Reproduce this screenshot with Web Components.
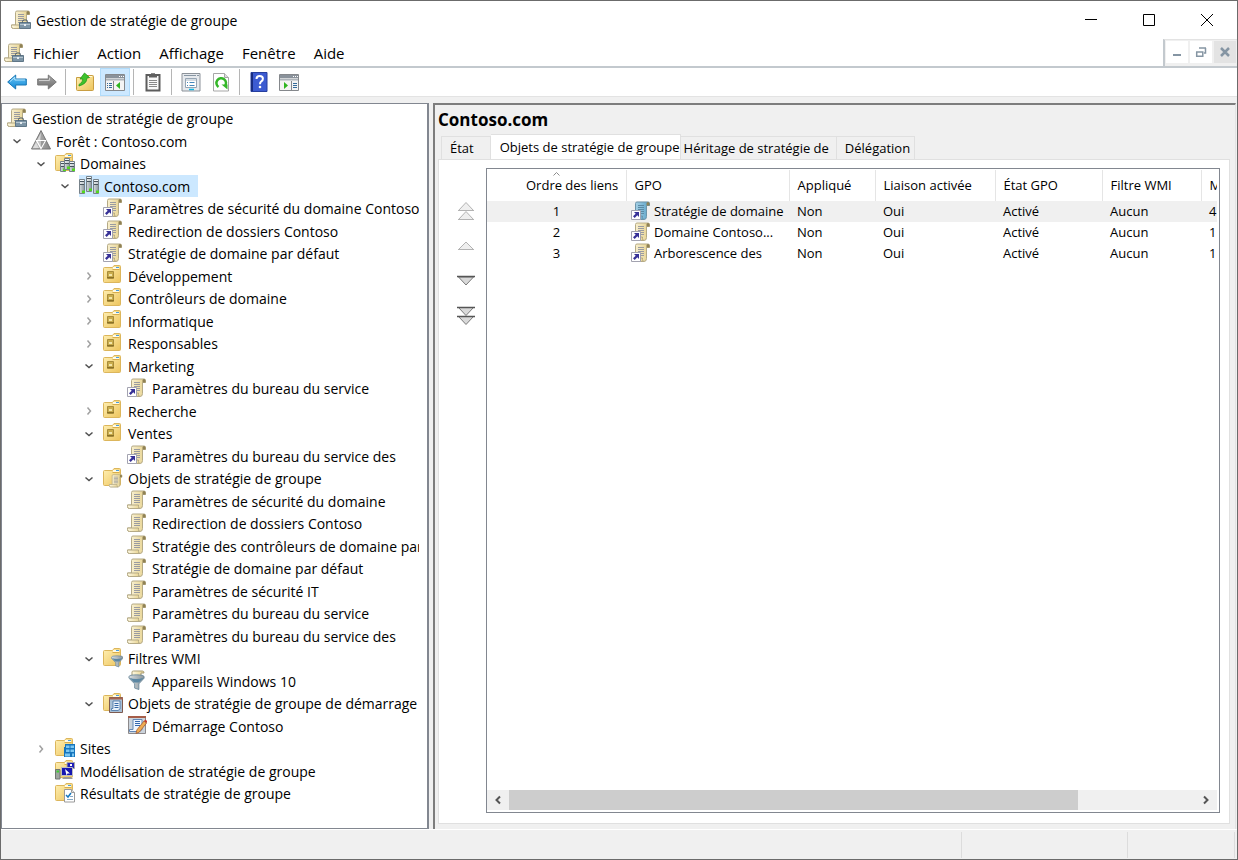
<!DOCTYPE html>
<html lang="fr">
<head>
  <meta charset="utf-8">
  <meta name="viewport" content="width=device-width, initial-scale=1">
  <title>Gestion de stratégie de groupe</title>
  <style>
    body {
      margin: 0;
      font-family: "Open Sans", "Noto Sans", sans-serif;
      font-size: 14px;
      color: #000;
    }
  </style>
</head>
<body>
  <gp-window>
    <title-bar slot="title">Gestion de stratégie de groupe</title-bar>
    <menu-bar slot="menu"></menu-bar>
    <tool-bar slot="tools"></tool-bar>
    <gp-tree slot="tree">
      <tree-item level="0" icon="console">Gestion de stratégie de groupe</tree-item>
      <tree-item level="1" icon="forest" state="open">Forêt : Contoso.com</tree-item>
      <tree-item level="2" icon="domains" state="open">Domaines</tree-item>
      <tree-item level="3" icon="domain" state="open" selected>Contoso.com</tree-item>
      <tree-item level="4" icon="link">Paramètres de sécurité du domaine Contoso</tree-item>
      <tree-item level="4" icon="link">Redirection de dossiers Contoso</tree-item>
      <tree-item level="4" icon="link">Stratégie de domaine par défaut</tree-item>
      <tree-item level="4" icon="unit" state="closed">Développement</tree-item>
      <tree-item level="4" icon="unit" state="closed">Contrôleurs de domaine</tree-item>
      <tree-item level="4" icon="unit" state="closed">Informatique</tree-item>
      <tree-item level="4" icon="unit" state="closed">Responsables</tree-item>
      <tree-item level="4" icon="unit" state="open">Marketing</tree-item>
      <tree-item level="5" icon="link">Paramètres du bureau du service</tree-item>
      <tree-item level="4" icon="unit" state="closed">Recherche</tree-item>
      <tree-item level="4" icon="unit" state="open">Ventes</tree-item>
      <tree-item level="5" icon="link">Paramètres du bureau du service des</tree-item>
      <tree-item level="4" icon="objects" state="open">Objets de stratégie de groupe</tree-item>
      <tree-item level="5" icon="policy">Paramètres de sécurité du domaine</tree-item>
      <tree-item level="5" icon="policy">Redirection de dossiers Contoso</tree-item>
      <tree-item level="5" icon="policy">Stratégie des contrôleurs de domaine par</tree-item>
      <tree-item level="5" icon="policy">Stratégie de domaine par défaut</tree-item>
      <tree-item level="5" icon="policy">Paramètres de sécurité IT</tree-item>
      <tree-item level="5" icon="policy">Paramètres du bureau du service</tree-item>
      <tree-item level="5" icon="policy">Paramètres du bureau du service des</tree-item>
      <tree-item level="4" icon="filters" state="open">Filtres WMI</tree-item>
      <tree-item level="5" icon="filter">Appareils Windows 10</tree-item>
      <tree-item level="4" icon="starters" state="open">Objets de stratégie de groupe de démarrage</tree-item>
      <tree-item level="5" icon="starter">Démarrage Contoso</tree-item>
      <tree-item level="2" icon="sites" state="closed">Sites</tree-item>
      <tree-item level="2" icon="modeling">Modélisation de stratégie de groupe</tree-item>
      <tree-item level="2" icon="results">Résultats de stratégie de groupe</tree-item>
    </gp-tree>
    <detail-pane slot="detail">
      <span slot="heading">Contoso.com</span>
      <order-buttons slot="order"></order-buttons>
      <link-list slot="list"></link-list>
    </detail-pane>
    <status-bar slot="status"></status-bar>
  </gp-window>

  <script>
    // ---- icons, all on a 20x20 grid ----
    const DEFS = `
      <defs>
        <linearGradient id="paper" x1="0" x2="1"><stop offset="0" stop-color="#fdf8e2"/><stop offset="1" stop-color="#e6d18c"/></linearGradient>
        <linearGradient id="gold" x1="0" y1="0" x2="1" y2="1"><stop offset="0" stop-color="#fff0b4"/><stop offset="1" stop-color="#edc45c"/></linearGradient>
        <linearGradient id="steel" x1="0" x2="1"><stop offset="0" stop-color="#d6dcdf"/><stop offset="1" stop-color="#8b969c"/></linearGradient>
        <linearGradient id="blue" x1="0" y1="0" x2="0" y2="1"><stop offset="0" stop-color="#6cc6f5"/><stop offset="1" stop-color="#1187d6"/></linearGradient>
        <linearGradient id="grey" x1="0" y1="0" x2="0" y2="1"><stop offset="0" stop-color="#aaa"/><stop offset="1" stop-color="#6c6c6c"/></linearGradient>
        <linearGradient id="tri" x1="0" x2="1"><stop offset="0" stop-color="#c4c4c4"/><stop offset="1" stop-color="#868686"/></linearGradient>
        <linearGradient id="aqua" x1="0" x2="1"><stop offset="0" stop-color="#b9dcec"/><stop offset="1" stop-color="#5ba3c8"/></linearGradient>
      </defs>`

    const scroll = (fill = 'paper', edge = '#b5aa86', line = '#9a9ba0') => `
      <path d="M4.500 2.500q0-1.500 1.500-1.500h11q1.500 0 1.500 1.500v2h-3v11q0 3-2.500 3h-10.500q-2 0-2-2v-1.500h4z" fill="url(#${fill})" stroke="${edge}"/>
      <path d="M15.500 4.500v-2q0-1.500 1.500-1.500t1.500 1.500v2z" fill="#8f8155"/>
      <path d="M.5 15h11v1.500q0 2 1.500 2H2.500q-2 0-2-2z" fill="url(#${fill})" stroke="${edge}"/>
      <path d="M7 4.500h6M7 6.500h6M7 8.500h6M7 10.500h6M7 12.500h6" stroke="${line}"/>`

    const shortcut = `
      <path d="M.5 9.500h9v9h-9z" fill="#fff" stroke="#a3a3b0"/>
      <path d="M3 11h5v5l-1.700-1.700-2.600 2.700-1.700-1.700 2.700-2.600z" fill="#373197"/>`

    const folder = `
      <path d="M.5 3.500q0-1 1-1h8l1.500-2h5.500q1 0 1 1v15q0 1-1 1h-15q-1 0-1-1z" fill="url(#gold)" stroke="#dcb65c"/>
      <path d="M10 4V2h6v2z" fill="#fffbe6"/>
      <path d="M13 2.500h3" stroke="#4a9ede"/>
      <path d="M9.500 4.500h7" stroke="#d7ad4b"/>`

    const server = (x, y, h) => `
      <path d="M${x + .5} ${y + .5}h5v${h}h-5z" fill="url(#steel)" stroke="#77828a"/>
      <path d="M${x + 1} ${y + 2.500}h4M${x + 1} ${y + 5.500}h4" stroke="#46545d"/>
      <path d="M${x + 1} ${y + 1.500}h4M${x + 1} ${y + 4}h4" stroke="#f4f8fa"/>
      <path d="M${x + 3} ${y + h - 2.500}h3v2.500h-3z" fill="#52d81d"/>`

    const funnel = `
      <path d="M.5 5q0-2 8-2t8 2v1.500l-5.500 6v6l-4.500-1.500v-4.500l-6-6z" fill="url(#steel)" stroke="#5c7d92" stroke-width=".8"/>
      <path d="M1 6q7 3 15 0l-5 5H6z" fill="#5b87a3"/>`

    const consoleWindow = (list, arrow) => `
      <path d="M.5 2.500h19v16H.5z" fill="#f4f4f4" stroke="#85888c"/>
      <path d="M1 3h18v3H1z" fill="#8a929b"/>
      <path d="M14 4.500h1M16 4.500h1M18 4.500h1" stroke="#fff"/>
      <path d="M1 7.500h18" stroke="#aeb4ba" stroke-width="2"/>
      ${list}${arrow}`

    const ICONS = {
      console: `${scroll()}
        <path d="M8.500 12.500h11v6h-11z" fill="#7d95a6" stroke="#5f7687"/>
        <path d="M11.500 12.500v-1q0-1.500 1.500-1.500h2q1.500 0 1.500 1.500v1" fill="none" stroke="#4a5b67"/>
        <path d="M9 14.500h10" stroke="#b4c4cf"/><path d="M13 14h2v2h-2z" fill="#e8eef2"/>`,
      forest: `
        <path d="M10 .5l9.500 18.500H.5z" fill="url(#tri)" stroke="#777"/>
        <path d="M10 3l-4.500 8.500h3.500zM5 12.500l-3 5.500h6z" fill="#ececec" opacity=".7"/>
        <path d="M5.500 10.500h9l-4.500 8z" fill="#c4c4c4" stroke="#fff" stroke-width="1.200"/>
        <path d="M10 11v6.500l3.700-6.500z" fill="#9a9a9a"/>`,
      domains: `${folder}${server(5, 8, 10)}${server(14, 8, 10)}${server(9, 5, 11)}`,
      domain: `${server(0, 4, 14)}${server(14, 4, 14)}${server(7, 1, 15)}`,
      link: `${scroll()}${shortcut}`,
      linkActive: `${scroll('aqua', '#6c94aa', '#5b8aa5')}${shortcut}`,
      policy: scroll(),
      unit: `${folder}
        <path d="M4.500 6.500h6v7h-6z" fill="#c9ac4c" stroke="#a88c3a"/>
        <path d="M4 12.500h7" stroke="#8a7026"/>
        <path d="M6 9h3v2H6z" fill="#f3e6a8"/>`,
      objects: `${folder}<svg x="6" y="6" width="14" height="14" viewBox="0 0 20 20">${scroll()}</svg>`,
      filters: `${folder}<svg x="8" y="5" width="13" height="15" viewBox="0 0 18 19">${funnel}</svg>`,
      filter: `<path d="M6.500 1h9q1.500 0 1.500 2h-3v4H5V2q0-1 1.500-1z" fill="url(#paper)" stroke="#a99d76"/>
        <svg x="1" y="2" width="18" height="18" viewBox="0 0 18 19">${funnel}</svg>`,
      starters: `${folder}
        <path d="M6.500 4.500h13v15h-13z" fill="#a9bfd4" stroke="#7e5b50"/>
        <path d="M6 5.500h14" stroke="#a46450" stroke-width="2"/>
        <path d="M10 8h7v8l-2 1.500H8.500v-2H10z" fill="#e8f1fa" stroke="#4471a5" stroke-width=".8"/>
        <path d="M11.500 10.500h4M11.500 12.500h4M11.500 14.500h4" stroke="#396aa8"/>`,
      starter: `
        <path d="M1.500 1.500h17v17h-17z" fill="#cbd3db" stroke="#8c898b"/>
        <path d="M1 2h18" stroke="#a65d48" stroke-width="2"/>
        <path d="M6 4.500h9v10l-2 2H2.500v-2H6z" fill="#eff6ff" stroke="#6588b5"/>
        <path d="M8 6.500h5M8 8.500h5M8 10.500h5" stroke="#3468ae" stroke-width="1.200"/>
        <path d="M17 6l2.500 2-7 9-3.500 1.500.8-3.500z" fill="#efac51" stroke="#a65d33" stroke-width=".8"/>
        <path d="M17 6l1.500-1.500 2 2-1 1.500z" fill="#c33d2f"/>`,
      sites: `${folder}
        <path d="M10 6h10v13H9V9h1z" fill="#1675bd"/>
        <path d="M11 7.500h3.500v2.500H11zM15.500 7.500H19v2.500h-3.500zM11 11.500h3.500v2.500H11zM15.500 11.500H19v2.500h-3.500zM10 15.500h5v3h-5zM17 15.500h2v3h-2z" fill="#7cc8f3"/>`,
      modeling: `${folder}
        <path d="M12 2.500h7.500v6H12z" fill="#2020b9" stroke="#aaa"/>
        <path d="M6.500 7.500h11v8h-11z" fill="#1717b1" stroke="#bebebe"/>
        <path d="M15 4h2v2h-2z" fill="#fff"/><path d="M10 9l5 4.500h-2.500l-1 2z" fill="#fff"/>
        <path d="M9 17h7l2 2H7z" fill="#9b9b9b"/>
        <path d="M.5 9.500h4.500v9.500H.5z" fill="#9fa6a1" stroke="#707570"/>
        <path d="M1.500 11.500h2.500" stroke="#3ecf35" stroke-width="2"/>`,
      results: `${folder}
        <path d="M9.500 6.500h7l3 3v9.500h-10z" fill="#fff" stroke="#9a9a9a"/>
        <path d="M16.500 6.500v3h3" fill="#ddd" stroke="#9a9a9a"/>
        <path d="M11 12l2 2 3-4" fill="none" stroke="#1677bd" stroke-width="1.500"/>
        <path d="M15 13.500h3M12 16.500h6" stroke="#85a9c7"/>`,
      back: `<path d="M.7 10l8-7v4h10.600v6H8.700v4z" fill="url(#blue)" stroke="#1876b5"/><path d="M3 9.500l4.800-4.200V8H18" stroke="#b3e6ff" fill="none"/>`,
      forward: `<path d="M19.300 10l-8-7v4H.7v6h10.600v4z" fill="url(#grey)" stroke="#777"/><path d="M2 8.500h10.500V6" stroke="#ccc" fill="none"/>`,
      up: `<path d="M1.500 5.500h6l1.500-2h8.500q1 0 1 1v13q0 1-1 1h-15q-1 0-1-1z" fill="url(#gold)" stroke="#c99e42"/>
        <path d="M11 4.500h6" stroke="#fffbe0"/>
        <path d="M4 12.500q4-2 3.800-5.500H5l4.500-6 5 4.500-2.700.7q.5 5.300-7.800 7.800z" fill="#3ec32c" stroke="#24971a" stroke-width=".8"/>`,
      treePane: consoleWindow('<path d="M8.500 9v9" stroke="#85888c"/><path d="M2 11.500h1M2 13.500h1M2 15.500h1M4 11.500h3M4 13.500h3M4 15.500h3" stroke="#356b9a"/>', '<path d="M15 10v7l-4-3.500z" fill="#2fb520"/>'),
      actionPane: consoleWindow('<path d="M12.500 9v9" stroke="#85888c"/><path d="M14 11.500h4M14 13.500h4M14 15.500h4" stroke="#356b9a"/>', '<path d="M5 10v7l4-3.500z" fill="#2fb520"/>'),
      clipboard: `<path d="M3.500 3h13v15.500h-13z" fill="#f8f8f8" stroke="#5c5c5c" stroke-width="2"/>
        <path d="M6 3h2V1.200h4V3h2v2.500H6z" fill="#606060"/>
        <path d="M6 8.500h8M6 10.500h8M6 12.500h8M6 14.500h8" stroke="#888"/>`,
      properties: `<path d="M1 1.500h18v17.500H1z" fill="#e6e9ed" stroke="#8c9299"/>
        <path d="M3 3.500h12M16 3.500h2" stroke="#8795a2"/>
        <path d="M4.500 6.500h11v9h-11z" fill="#fff" stroke="#96a5b4"/>
        <path d="M5 8h10" stroke="#a9b8c5"/>
        <path d="M6 10.500h1M6 13.500h1M8.500 10.500h5M8.500 13.500h5" stroke="#4588bd"/>
        <path d="M8 17.500h5" stroke="#11b7e5" stroke-width="1.500"/>`,
      refresh: `<path d="M2.500 1.500h11l4 4v13.500h-15z" fill="#fff" stroke="#a7a7a7"/>
        <path d="M13.500 1.500v4h4" fill="#ddd" stroke="#a7a7a7"/>
        <path d="M7.500 15A4.800 4.800 0 1 1 14 14" fill="none" stroke="#35b729" stroke-width="2.500"/>
        <path d="M10.500 12.500h6v5z" fill="#35b729"/>`,
      help: `<path d="M2 .5h16v19H2z" fill="#3c5bd1" stroke="#263f9f"/><path d="M3 1v18" stroke="#182c80" stroke-width="2"/>
        <path d="M7.500 7q0-3 3.200-3t3.200 2.700q0 1.800-1.600 2.700-1.300.8-1.300 2.800" fill="none" stroke="#fff" stroke-width="2"/><circle cx="11" cy="15" r="1.300" fill="#fff"/>`
    }

    class GpIcon extends HTMLElement {
      constructor () {
        super()
        this.shadow = this.attachShadow({ mode: 'open' })
      }

      connectedCallback () {
        this.shadow.innerHTML =
          /* html */`
          <style>
            :host {
              display: block;
              flex: none;
              height: 20px;
              width: 20px;
            }

            svg {
              display: block;
            }
          </style>
          <svg xmlns="http://www.w3.org/2000/svg" viewBox="0 0 20 20" aria-hidden="true">${DEFS}${ICONS[this.getAttribute('name')]}</svg>
          `
      }
    }

    class GpWindow extends HTMLElement {
      constructor () {
        super()
        this.shadow = this.attachShadow({ mode: 'open' })
      }

      connectedCallback () {
        this.shadow.innerHTML =
          /* html */`
          <style>
            :host {
              background-color: #f0f0f0;
              border: 1px solid #6b6b6b;
              box-sizing: border-box;
              display: flex;
              flex-direction: column;
              min-height: 100vh;
            }

            .panes {
              display: grid;
              flex: 1;
              gap: 4px;
              grid-template-columns: 428px minmax(0, 1fr);
              padding: 6px 1px 0 0;
            }
          </style>
          <slot name="title"></slot>
          <slot name="menu"></slot>
          <slot name="tools"></slot>
          <main class="panes">
            <slot name="tree"></slot>
            <slot name="detail"></slot>
          </main>
          <slot name="status"></slot>
          `
      }
    }

    class TitleBar extends HTMLElement {
      constructor () {
        super()
        this.shadow = this.attachShadow({ mode: 'open' })
      }

      connectedCallback () {
        this.shadow.innerHTML =
          /* html */`
          <style>
            :host {
              align-items: stretch;
              background-color: #fff;
              display: flex;
              height: 38px;
              padding-right: 1px;
            }

            .title {
              align-items: center;
              display: flex;
              flex: 1;
              gap: 5px;
              padding-left: 10px;
            }

            button {
              background: none;
              border: 0;
              padding: 0;
              width: 58px;
            }

            button svg {
              display: block;
              fill: none;
              height: 14px;
              margin: auto;
              stroke: #000;
              width: 14px;
            }
          </style>
          <div class="title"><gp-icon name="console"></gp-icon><slot></slot></div>
          <button aria-label="Réduire"><svg viewBox="0 0 14 14"><path d="M1 6.500h12"/></svg></button>
          <button aria-label="Agrandir"><svg viewBox="0 0 14 14"><path d="M1.500 1.500h11v11h-11z"/></svg></button>
          <button aria-label="Fermer"><svg viewBox="0 0 14 14"><path d="M1 1l12 12M13 1L1 13"/></svg></button>
          `
      }
    }

    class MenuBar extends HTMLElement {
      constructor () {
        super()
        this.shadow = this.attachShadow({ mode: 'open' })
        this.items = ['Fichier', 'Action', 'Affichage', 'Fenêtre', 'Aide']
      }

      connectedCallback () {
        this.shadow.innerHTML =
          /* html */`
          <style>
            :host {
              background-color: #fff;
              border-bottom: 2px solid #c3c9ce;
              display: flex;
              font-size: 15px;
              height: 27px;
            }

            nav {
              align-items: center;
              display: flex;
              flex: 1;
              gap: 18px;
              padding: 1px 0 0 3px;
            }

            button {
              background: none;
              border: 0;
              color: inherit;
              font: inherit;
              padding: 0;
            }

            nav gp-icon {
              margin-right: -9px;
            }

            .child-buttons {
              background-color: #f0f0f0;
              border-left: 2px solid #c3c9ce;
              border-top: 1px solid #e3e3e3;
              display: flex;
              gap: 2px;
              padding: 1px 1px 3px 1px;
            }

            .child-buttons button {
              background-color: #fff;
              width: 22px;
            }

            .child-buttons button:last-child {
              background-color: #e3e3e3;
            }

            .child-buttons svg {
              display: block;
              fill: none;
              height: 12px;
              margin: auto;
              stroke: #8595a3;
              stroke-width: 2;
              width: 12px;
            }
          </style>
          <nav>
            <gp-icon name="console"></gp-icon>
            ${this.items.map(item => `<button>${item}</button>`).join('')}
          </nav>
          <div class="child-buttons">
            <button aria-label="Réduire la fenêtre"><svg viewBox="0 0 12 12"><path d="M2 9h8"/></svg></button>
            <button aria-label="Restaurer la fenêtre"><svg viewBox="0 0 12 12"><path d="M4 2h7M10.500 2v5H9" stroke-width="1.500"/><path d="M1 6h7.500M1.700 6v4.300h6.100V6" stroke-width="1.500"/></svg></button>
            <button aria-label="Fermer la fenêtre"><svg viewBox="0 0 12 12"><path d="M2 2l8 8M10 2l-8 8" stroke-width="2.500"/></svg></button>
          </div>
          `
      }
    }

    class ToolBar extends HTMLElement {
      constructor () {
        super()
        this.shadow = this.attachShadow({ mode: 'open' })
      }

      connectedCallback () {
        this.shadow.innerHTML =
          /* html */`
          <style>
            :host {
              align-items: center;
              background-color: #fff;
              border-bottom: 1px solid #e3e3e3;
              display: flex;
              height: 28px;
              padding-left: 1px;
            }

            button {
              background: none;
              border: 1px solid transparent;
              box-sizing: border-box;
              display: flex;
              height: 28px;
              justify-content: center;
              align-items: center;
              padding: 0;
              width: 30px;
            }

            button.active {
              background-color: #cce8ff;
              border-color: #b0dbfa;
            }

            .divider {
              background-color: #b5b5b5;
              height: 26px;
              margin: 0 4px 0 3px;
              width: 1px;
            }
          </style>
          <button aria-label="Précédent"><gp-icon name="back"></gp-icon></button>
          <button aria-label="Suivant"><gp-icon name="forward"></gp-icon></button>
          <span class="divider"></span>
          <button aria-label="Dossier parent"><gp-icon name="up"></gp-icon></button>
          <button class="active" aria-label="Arborescence"><gp-icon name="treePane"></gp-icon></button>
          <span class="divider"></span>
          <button aria-label="Coller"><gp-icon name="clipboard"></gp-icon></button>
          <span class="divider"></span>
          <button aria-label="Propriétés"><gp-icon name="properties"></gp-icon></button>
          <button aria-label="Actualiser"><gp-icon name="refresh"></gp-icon></button>
          <span class="divider"></span>
          <button aria-label="Aide"><gp-icon name="help"></gp-icon></button>
          <button aria-label="Volet Actions"><gp-icon name="actionPane"></gp-icon></button>
          `
      }
    }

    class GpTree extends HTMLElement {
      constructor () {
        super()
        this.shadow = this.attachShadow({ mode: 'open' })
      }

      connectedCallback () {
        this.setAttribute('role', 'tree')
        this.shadow.innerHTML =
          /* html */`
          <style>
            :host {
              background-color: #fff;
              border: 1px solid #828790;
              border-right-width: 2px;
              box-sizing: border-box;
              display: block;
              overflow: hidden;
              padding: 3px 8px 0 5px;
            }

            .rows {
              overflow: hidden;
            }
          </style>
          <div class="rows"><slot></slot></div>
          `
      }
    }

    class TreeItem extends HTMLElement {
      constructor () {
        super()
        this.shadow = this.attachShadow({ mode: 'open' })
      }

      connectedCallback () {
        this.setAttribute('role', 'treeitem')
        this.render()
      }

      get toggle () {
        const state = this.getAttribute('state')
        if (this.getAttribute('level') === '0') return ''
        if (!state) return '<span class="toggle"></span>'
        const open = state === 'open'
        return `<button class="toggle ${state}" aria-label="${open ? 'Réduire' : 'Développer'}">
          <svg viewBox="0 0 10 10"><path d="${open ? 'M1.500 3.500l3.500 3 3.500-3' : 'M3.500 1.500l3 3.500-3 3.500'}"/></svg>
        </button>`
      }

      render () {
        const level = Number(this.getAttribute('level'))
        this.style.setProperty('--depth', Math.max(level - 1, 0))
        this.shadow.innerHTML =
          /* html */`
          <style>
            :host {
              align-items: center;
              display: flex;
              height: 23px;
              padding-left: calc(var(--depth) * 24px);
              white-space: nowrap;
            }

            :host(:nth-child(even)) {
              height: 22px;
            }

            .toggle {
              background: none;
              border: 0;
              flex: none;
              height: 20px;
              margin-right: 4px;
              padding: 0;
              width: 20px;
            }

            .toggle svg {
              display: block;
              fill: none;
              height: 10px;
              margin: auto;
              stroke: #505050;
              stroke-width: 1.500;
              width: 10px;
            }

            .toggle.closed svg {
              stroke: #a0a0a0;
            }

            .node {
              align-items: center;
              align-self: stretch;
              display: flex;
              gap: 5px;
            }

            .node gp-icon {
              margin-bottom: 2px;
            }

            :host([selected]) .node {
              background-color: #cce8ff;
              padding-right: 8px;
            }
          </style>
          ${this.toggle}
          <span class="node"><gp-icon name="${this.getAttribute('icon')}"></gp-icon><span><slot></slot></span></span>
          `
      }
    }

    class DetailPane extends HTMLElement {
      constructor () {
        super()
        this.shadow = this.attachShadow({ mode: 'open' })
        this.tabs = ['État', 'Objets de stratégie de groupe', 'Héritage de stratégie de', 'Délégation']
      }

      connectedCallback () {
        this.shadow.innerHTML =
          /* html */`
          <style>
            :host {
              border-left: 2px solid #7d7d7d;
              border-right: 1px solid #e3e3e3;
              border-top: 2px solid #7d7d7d;
              box-sizing: border-box;
              display: flex;
              flex-direction: column;
              padding: 0 5px 5px 3px;
            }

            h1 {
              font-size: 17px;
              line-height: 29px;
              margin: 0;
            }

            .tabs {
              align-items: flex-end;
              display: flex;
              padding-left: 3px;
            }

            .tabs button {
              background-color: #f0f0f0;
              border: 1px solid #e0e0e0;
              border-bottom: 0;
              box-sizing: border-box;
              color: inherit;
              font: inherit;
              font-size: 13px;
              height: 23px;
              padding: 0 4px 0 8px;
              white-space: nowrap;
            }

            .tabs button + button {
              border-left: 0;
            }

            .tabs button:first-child {
              padding-right: 16px;
            }

            .tabs button.active {
              background-color: #fff;
              height: 26px;
              margin-bottom: -1px;
              padding: 0 0 2px 9px;
            }

            .tabs button.active + button {
              padding-left: 3px;
              padding-right: 7px;
            }

            .page {
              background-color: #fff;
              border: 1px solid #e0e0e0;
              display: grid;
              flex: 1;
              grid-template-columns: 47px minmax(0, 1fr);
              padding: 8px 9px 10px 0;
            }
          </style>
          <h1><slot name="heading"></slot></h1>
          <div class="tabs" role="tablist">
            ${this.tabs.map((tab, i) => `<button role="tab" class="${i === 1 ? 'active' : ''}">${tab}</button>`).join('')}
          </div>
          <div class="page" role="tabpanel">
            <slot name="order"></slot>
            <slot name="list"></slot>
          </div>
          `
      }
    }

    class OrderButtons extends HTMLElement {
      constructor () {
        super()
        this.shadow = this.attachShadow({ mode: 'open' })
      }

      connectedCallback () {
        this.shadow.innerHTML =
          /* html */`
          <style>
            :host {
              align-items: center;
              display: flex;
              flex-direction: column;
              gap: 13px;
              padding: 32px 0 0 6px;
            }

            button {
              background: none;
              border: 0;
              height: 22px;
              padding: 0;
              width: 22px;
            }

            svg {
              display: block;
              fill: #d9d9d9;
              height: 22px;
              stroke: #7a7a7a;
              width: 22px;
            }

            button:disabled svg {
              fill: #efefef;
              stroke: #b3b3b3;
            }
          </style>
          <button disabled aria-label="Déplacer au début"><svg viewBox="0 0 22 22"><path d="M11 2.500l7.500 8h-15zM11 11.500l7.500 8h-15z"/><path d="M3 10.500h16M3 19.500h16"/></svg></button>
          <button disabled aria-label="Monter"><svg viewBox="0 0 22 22"><path d="M11 7l7.500 7.500h-15z"/><path d="M3 14.500h16"/></svg></button>
          <button aria-label="Descendre"><svg viewBox="0 0 22 22"><path d="M11 15l7.500-8h-15z"/><path d="M2 6.500h18" stroke="#555" stroke-width="1.500"/></svg></button>
          <button aria-label="Déplacer à la fin"><svg viewBox="0 0 22 22"><path d="M11 10.500l7.500-8h-15zM11 19.500l7.500-8h-15z"/><path d="M2 2.500h18M2 11.500h18" stroke="#555" stroke-width="1.500"/></svg></button>
          `
      }
    }

    class LinkList extends HTMLElement {
      constructor () {
        super()
        this.shadow = this.attachShadow({ mode: 'open' })
        this.columns = ['Ordre des liens', 'GPO', 'Appliqué', 'Liaison activée', 'État GPO', 'Filtre WMI', 'M']
        this.widths = [139, 163, 86, 120, 107, 99, 60]
        this.rows = [
          ['1', 'Stratégie de domaine', 'Non', 'Oui', 'Activé', 'Aucun', '4'],
          ['2', 'Domaine Contoso...', 'Non', 'Oui', 'Activé', 'Aucun', '1'],
          ['3', 'Arborescence des', 'Non', 'Oui', 'Activé', 'Aucun', '1']
        ]
      }

      connectedCallback () {
        this.render()
      }

      row (cells, index) {
        const [order, name, ...rest] = cells
        return `<tr>
          <td class="order">${order}</td>
          <td class="gpo"><div><gp-icon name="${index === 0 ? 'linkActive' : 'link'}"></gp-icon>${name}</div></td>
          ${rest.map(cell => `<td>${cell}</td>`).join('')}
        </tr>`
      }

      render () {
        this.shadow.innerHTML =
          /* html */`
          <style>
            :host {
              border: 1px solid #828790;
              box-sizing: border-box;
              display: flex;
              flex-direction: column;
              font-size: 13px;
              padding: 1px 2px 2px 0;
            }

            .view {
              flex: 1;
              overflow: hidden;
            }

            table {
              border-collapse: collapse;
              table-layout: fixed;
              white-space: nowrap;
              width: 774px;
            }

            th,
            td {
              box-sizing: border-box;
              padding: 0 0 2px 8px;
            }

            th {
              border-right: 1px solid #e5e5e5;
              font-weight: 400;
              height: 31px;
              text-align: left;
            }

            th.order {
              padding-left: 39px;
            }

            .sort {
              display: block;
              fill: none;
              height: 4px;
              margin-left: 27px;
              margin-top: -4px;
              stroke: #8c8c8c;
              width: 7px;
            }

            td {
              height: 21px;
            }

            td.order {
              padding-left: 0;
              text-align: center;
            }

            tbody tr:first-child {
              background-color: #f0f0f0;
            }

            td.gpo {
              padding-left: 5px;
            }

            .gpo div {
              align-items: center;
              display: flex;
              gap: 3px;
              height: 19px;
            }
          </style>
          <div class="view">
            <table>
              <colgroup>${this.widths.map(width => `<col style="width: ${width}px">`).join('')}</colgroup>
              <thead>
                <tr>${this.columns.map((name, i) => i === 0
                  ? `<th class="order"><svg class="sort" viewBox="0 0 7 4"><path d="M.5 3.500l3-3 3 3"/></svg>${name}</th>`
                  : `<th>${name}</th>`).join('')}</tr>
              </thead>
              <tbody>${this.rows.map((cells, i) => this.row(cells, i)).join('')}</tbody>
            </table>
          </div>
          <scroll-bar></scroll-bar>
          `
      }
    }

    class ScrollBar extends HTMLElement {
      constructor () {
        super()
        this.shadow = this.attachShadow({ mode: 'open' })
      }

      connectedCallback () {
        this.shadow.innerHTML =
          /* html */`
          <style>
            :host {
              background-color: #f0f0f0;
              display: flex;
              height: 20px;
            }

            button {
              background: none;
              border: 0;
              padding: 0;
              width: 22px;
            }

            svg {
              display: block;
              fill: none;
              height: 10px;
              margin: auto;
              stroke: #555;
              stroke-width: 2;
              width: 10px;
            }

            .track {
              flex: 1;
            }

            .thumb {
              background-color: #cdcdcd;
              height: 100%;
              width: 83%;
            }
          </style>
          <button aria-label="Défiler à gauche"><svg viewBox="0 0 10 10"><path d="M7 1.500L3.500 5 7 8.500"/></svg></button>
          <div class="track"><div class="thumb"></div></div>
          <button aria-label="Défiler à droite"><svg viewBox="0 0 10 10"><path d="M3 1.500L6.500 5 3 8.500"/></svg></button>
          `
      }
    }

    class StatusBar extends HTMLElement {
      constructor () {
        super()
        this.shadow = this.attachShadow({ mode: 'open' })
      }

      connectedCallback () {
        this.shadow.innerHTML =
          /* html */`
          <style>
            :host {
              border-top: 1px solid #fff;
              box-sizing: border-box;
              display: grid;
              grid-template-columns: 1fr 166px 107px;
              height: 30px;
              padding: 2px 2px 1px 0;
            }

            span {
              border-right: 1px solid #dcdcdc;
            }
          </style>
          <span></span><span></span><span></span>
          `
      }
    }

    customElements.define('gp-icon', GpIcon)
    customElements.define('gp-window', GpWindow)
    customElements.define('title-bar', TitleBar)
    customElements.define('menu-bar', MenuBar)
    customElements.define('tool-bar', ToolBar)
    customElements.define('gp-tree', GpTree)
    customElements.define('tree-item', TreeItem)
    customElements.define('detail-pane', DetailPane)
    customElements.define('order-buttons', OrderButtons)
    customElements.define('link-list', LinkList)
    customElements.define('scroll-bar', ScrollBar)
    customElements.define('status-bar', StatusBar)
  </script>
</body>
</html>
